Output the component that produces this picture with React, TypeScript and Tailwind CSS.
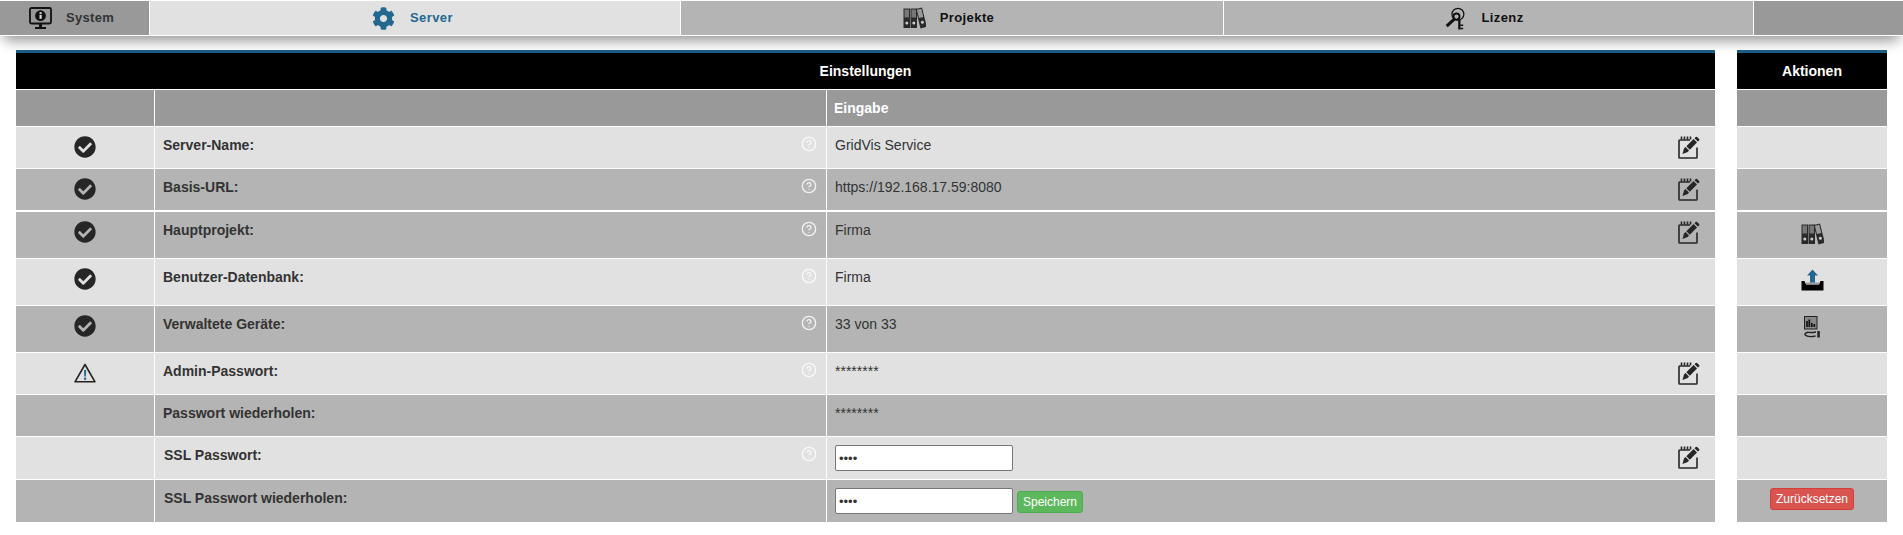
import React from 'react';
import { CircleHelp } from 'lucide-react';
import { FaCheckCircle, FaCog } from 'react-icons/fa';

function MonitorIcon() {
  return (
    <svg viewBox="0 0 23 23" className="w-[23px] h-[23px]">
      <rect x="1" y="1" width="21" height="15.5" rx="1.5" fill="none" stroke="#111" strokeWidth="1.8" />
      <circle cx="11.5" cy="8.7" r="5.4" fill="#111" />
      <rect x="10.5" y="7.8" width="2.2" height="4" fill="#ddd" />
      <rect x="10.5" y="5.2" width="2.2" height="1.7" fill="#ddd" />
      <rect x="10" y="17" width="3" height="3" fill="#111" />
      <rect x="6" y="20" width="11" height="2" fill="#111" />
    </svg>
  );
}

function BindersIcon() {
  return (
    <svg viewBox="0 0 23 22" className="w-[23px] h-[22px]">
      <rect x="0.5" y="1.5" width="6.5" height="19.5" fill="#2a2a2a" />
      <rect x="1.5" y="2.5" width="4.5" height="8" fill="#777" />
      <rect x="7.5" y="1.5" width="6.5" height="19.5" fill="#2a2a2a" />
      <rect x="8.5" y="2.5" width="4.5" height="8" fill="#777" />
      <circle cx="3.8" cy="16" r="1.5" fill="#ccc" />
      <circle cx="10.8" cy="16" r="1.5" fill="#ccc" />
      <g transform="rotate(-14 18 11)">
        <rect x="15" y="1" width="6.5" height="20" fill="#2a2a2a" />
        <rect x="16" y="2" width="4.5" height="8.5" fill="#999" />
        <circle cx="18.3" cy="15.5" r="1.5" fill="#ccc" />
      </g>
    </svg>
  );
}

function KeysIcon() {
  return (
    <svg viewBox="0 0 23 23" className="w-[22px] h-[23px]" fill="none" stroke="#111">
      <circle cx="13.5" cy="7" r="6.2" strokeWidth="1.3" />
      <circle cx="12" cy="9.5" r="3.2" strokeWidth="2" />
      <path d="M10 12 1.8 19.5" strokeWidth="3.2" />
      <path d="M15 12.5V23" strokeWidth="2.4" />
      <path d="M16 18.5h3M16 22h3" strokeWidth="1.6" />
    </svg>
  );
}

function EditIcon() {
  return (
    <svg viewBox="0 0 22 23" className="w-[22px] h-[23px]">
      <path d="M12 4H1.8a0.8 0.8 0 0 0-0.8 .8v16.4a0.8 0.8 0 0 0 .8 .8h16.400a0.800 0.800 0 0 0 .8-.8V11.500" fill="none" stroke="#262626" strokeWidth="1.600" />
      <path d="M3.500 0.500v3M6.500 0.500v3M9.500 0.500v3M12.500 0.500v3" stroke="#262626" strokeWidth="1.600" />
      <path d="M4.500 18 6 12.600 7.500 11 11 14.500 9.700 16Z" fill="#262626" />
      <path d="M8.300 10.200 15.600 3 19 6.400 11.800 13.700Z" fill="#262626" />
      <path d="M16.500 2.200 17.700 1a1 1 0 0 1 1.400 0l2 2a1 1 0 0 1 0 1.400L19.900 5.600Z" fill="#262626" />
    </svg>
  );
}

function WarningIcon() {
  return (
    <svg viewBox="0 0 22 20" className="w-[22px] h-[20px]">
      <path d="M11 1.5 1 18.8h20Z" fill="none" stroke="#222" strokeWidth="1.6" strokeLinejoin="round" />
      <path d="M10 7h2.2l-.3 6.5h-1.6Z" fill="#23688f" />
      <rect x="10" y="14.6" width="2.2" height="2.2" fill="#23688f" />
    </svg>
  );
}

function UploadIcon() {
  return (
    <svg viewBox="0 0 23 22" className="w-[23px] h-[22px]">
      <path d="M0.5 12H3.5L5 15.5H18L19.5 12H22.5V21.5H0.5Z" fill="#000" />
      <path d="M5 13.5H18L17.5 15.5H5.500Z" fill="#999" />
      <path d="M11.5 0.5 17 6.5H14V13.5H9V6.5H6Z" fill="#23688f" />
    </svg>
  );
}

function DeviceHandIcon() {
  return (
    <svg viewBox="0 0 16 22" className="w-[16px] h-[22px]">
      <rect x="0.5" y="0.5" width="12.5" height="12.5" fill="#888" stroke="#222" />
      <path d="M3 11V5M5.300 11V3.500M7.800 11V7M10.300 11V8" stroke="#111" strokeWidth="1.700" />
      <path d="M0.5 18.500c1.500-2 3.500-2.500 5-2h3.500c1 0 2-.5 3-.5M0.500 18.500c3 3 7 2.500 11 1.500" fill="none" stroke="#222" strokeWidth="1.300" />
      <rect x="13.300" y="15" width="2.500" height="6.500" fill="#222" />
    </svg>
  );
}

const tabs = [
  { label: 'Server', width: 'w-[530px]', bg: 'bg-[#e1e1e1]', text: 'text-[#23688f]', gap: 'gap-[15px]', pad: 'pr-[5px]', icon: <FaCog size={23} color="#23688f" /> },
  { label: 'Projekte', width: 'w-[542px]', bg: 'bg-[#b4b4b4]', text: 'text-[#111]', gap: 'gap-[14px]', pad: 'pr-[7px]', icon: <BindersIcon /> },
  { label: 'Lizenz', width: 'w-[529px]', bg: 'bg-[#b4b4b4]', text: 'text-[#111]', gap: 'gap-[14px]', pad: 'pr-[8px]', icon: <KeysIcon /> },
];

const rows = [
  { height: 'h-[41px]', mb: 'mb-px', bg: 'bg-[#e1e1e1]', status: 'ok', label: 'Server-Name:', help: true, value: 'GridVis Service', edit: true },
  { height: 'h-[41px]', mb: 'mb-[2px]', bg: 'bg-[#b4b4b4]', status: 'ok', label: 'Basis-URL:', help: true, value: 'https://192.168.17.59:8080', edit: true },
  { height: 'h-[46px]', mb: 'mb-px', bg: 'bg-[#b4b4b4]', status: 'ok', label: 'Hauptprojekt:', help: true, value: 'Firma', edit: true, action: <div className="pt-px"><BindersIcon /></div> },
  { height: 'h-[46px]', mb: 'mb-px', bg: 'bg-[#e1e1e1]', status: 'ok', label: 'Benutzer-Datenbank:', help: true, value: 'Firma', action: <UploadIcon /> },
  { height: 'h-[46px]', mb: 'mb-px', bg: 'bg-[#b4b4b4]', status: 'ok', label: 'Verwaltete Geräte:', help: true, value: '33 von 33', action: <DeviceHandIcon /> },
  { height: 'h-[41px]', mb: 'mb-px', bg: 'bg-[#e1e1e1]', status: 'warn', label: 'Admin-Passwort:', help: true, value: '********', edit: true },
  { height: 'h-[41px]', mb: 'mb-px', bg: 'bg-[#b4b4b4]', label: 'Passwort wiederholen:', value: '********' },
  { height: 'h-[42px]', mb: 'mb-px', bg: 'bg-[#e1e1e1]', label: 'SSL Passwort:', help: true, input: true, edit: true, labelPad: 'pl-[9px]' },
  { height: 'h-[42px]', mb: '', bg: 'bg-[#b4b4b4]', label: 'SSL Passwort wiederholen:', input: true, save: true, reset: true, labelPad: 'pl-[9px]' },
];

const rowGrid = 'grid grid-cols-[138px_671px_1fr] gap-x-px';

export default function App() {
  return (
    <div className="min-h-[535px] bg-white text-[14px] text-[#333]" style={{ fontFamily: '"Liberation Sans", Arial, sans-serif' }}>
      {/* Top tabs */}
      <nav className="pt-px border-b border-white flex h-[34px] gap-px shadow-[0_8px_14px_-4px_rgba(0,0,0,0.45)] relative box-content">
        <div className="w-[149px] bg-[#999] flex items-center justify-start pl-[29px] gap-[14px] text-[13px] font-bold tracking-[0.3px] text-[#333]">
          <MonitorIcon />
          <span>System</span>
        </div>
        {tabs.map((tab) => (
          <div key={tab.label} className={`${tab.width} ${tab.bg} ${tab.gap} ${tab.text} ${tab.pad} flex items-center justify-center text-[13px] font-bold tracking-[0.4px]`}>
            {tab.icon}
            <span>{tab.label}</span>
          </div>
        ))}
        <div className="flex-1 bg-[#999]" />
      </nav>

      <div className="flex gap-[22px] px-4 mt-[14px]">
        {/* Settings */}
        <div className="flex-1 min-w-0">
          <div className="h-[39px] mb-px border-t-[3px] border-[#1f5f85] bg-black text-white font-bold flex items-center justify-center">
            Einstellungen
          </div>
          <div className={`${rowGrid} h-[36px] mb-px`}>
            <div className="bg-[#999]" />
            <div className="bg-[#999]" />
            <div className="bg-[#999] text-white font-bold pl-[7px] flex items-center">Eingabe</div>
          </div>
          {rows.map((row) => (
            <div key={row.label} className={`${rowGrid} ${row.height} ${row.mb}`}>
              <div className={`${row.bg} flex justify-center pt-[9px]`}>
                {row.status === 'ok' && <FaCheckCircle size={22} color="#262626" />}
                {row.status === 'warn' && <div className="pt-px"><WarningIcon /></div>}
              </div>
              <div className={`${row.bg} ${row.labelPad ?? 'pl-[8px]'} flex justify-between pr-[9px] pt-[8px] font-bold`}>
                <span>{row.label}</span>
                {row.help && <CircleHelp size={16} color="#fff" strokeWidth={2} className="opacity-85 mt-px" />}
              </div>
              <div className={`${row.bg} flex justify-between pl-[8px] pr-[15px]`}>
                {row.input ? (
                  <div className="flex items-start gap-[4px] pt-[8px]">
                    <input type="password" readOnly defaultValue="1234" className="w-[178px] h-[26px] bg-white border border-[#767676] rounded-[2px] px-[3px] text-[13px] outline-none" />
                    {row.save && (
                      <button className="mt-[3px] h-[22px] w-[66px] bg-[#5cb85c] border border-[#4cae4c] rounded-[3px] text-white text-[12px]">Speichern</button>
                    )}
                  </div>
                ) : (
                  <span className="pt-[8px]">{row.value}</span>
                )}
                {row.edit && <div className="pt-[9px]"><EditIcon /></div>}
              </div>
            </div>
          ))}
        </div>

        {/* Actions */}
        <div className="w-[150px]">
          <div className="h-[39px] mb-px border-t-[3px] border-[#1f5f85] bg-black text-white font-bold flex items-center justify-center">
            Aktionen
          </div>
          <div className="h-[36px] mb-px bg-[#999]" />
          {rows.map((row) => (
            <div key={row.label} className={`${row.height} ${row.mb} ${row.bg} flex justify-center pt-[10px]`}>
              {row.action}
              {row.reset && (
                <button className="h-[22px] w-[84px] -mt-[2px] bg-[#d9534f] border border-[#d43f3a] rounded-[3px] text-white text-[12px]">Zurücksetzen</button>
              )}
            </div>
          ))}
        </div>
      </div>
    </div>
  );
}
